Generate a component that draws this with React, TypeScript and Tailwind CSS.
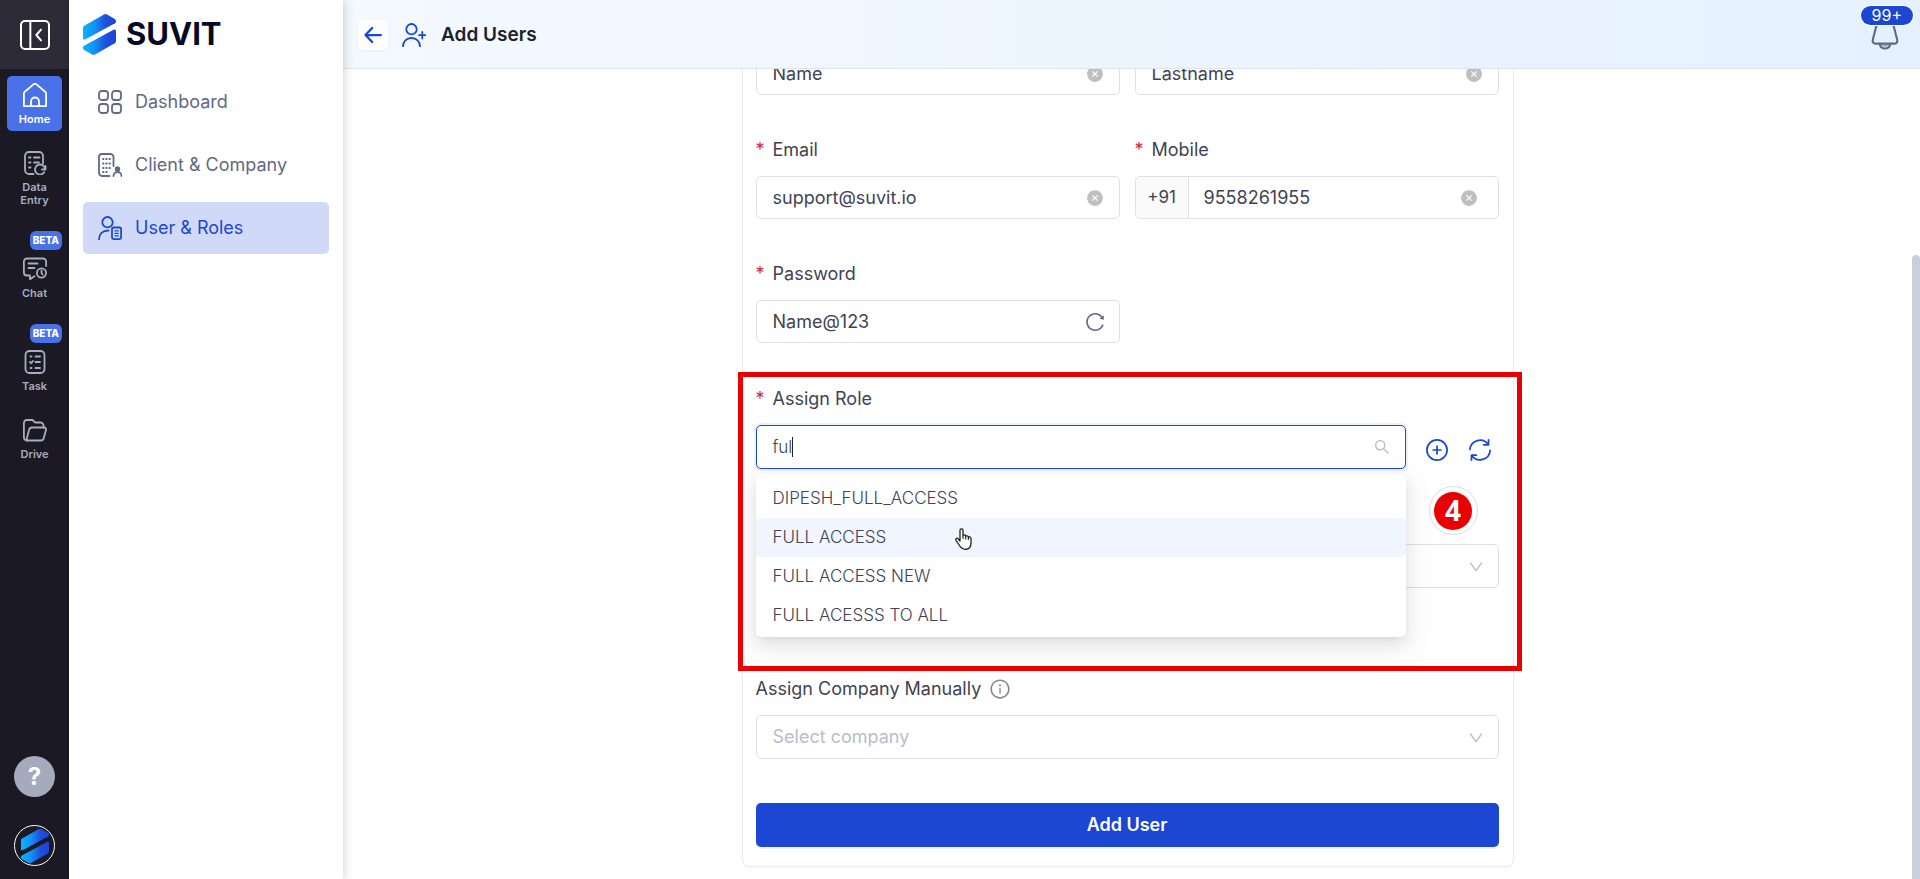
import { useId } from 'react'
import type { ReactNode } from 'react'
import {
  AiFillCloseCircle,
  AiOutlineDown,
  AiOutlineInfoCircle,
  AiOutlineReload,
  AiOutlineSearch,
} from 'react-icons/ai'
import { clsx } from 'clsx'

// ---- Icons ----
function Icon({ children, className = 'size-6', width = 1.8 }: { children: ReactNode; className?: string; width?: number }) {
  return (
    <svg
      viewBox="0 0 24 24"
      className={className}
      fill="none"
      stroke="currentColor"
      strokeWidth={width}
      strokeLinecap="round"
      strokeLinejoin="round"
      aria-hidden="true"
    >
      {children}
    </svg>
  )
}

function SuvitMark({ className }: { className: string }) {
  const id = useId()
  return (
    <svg viewBox="0 0 33 41" className={className} aria-hidden="true">
      <defs>
        <linearGradient id={id} x1="0" y1="0" x2="1" y2="0">
          <stop offset="0" stopColor="#00b7ff" />
          <stop offset="0.35" stopColor="#1590f5" />
          <stop offset="0.7" stopColor="#1d4fdb" />
          <stop offset="1" stopColor="#1b45d4" />
        </linearGradient>
      </defs>
      <path
        fill={`url(#${id})`}
        d="M1.2 11.8 21 .5Q22.500-.3 24 .5L31.800 4.900Q33 5.700 33 7V7.500Q33 8.600 32 9.200L2.500 25.200Q0 26.300 0 24V14Q0 12.500 1.200 11.800Z"
      />
      <path
        fill={`url(#${id})`}
        d="M1 31.800 30.500 15.800Q33 14.700 33 17V27Q33 28.500 31.800 29.200L12 40.500Q10.500 41.300 9 40.500L1.200 36.100Q0 35.300 0 34V33.500Q0 32.400 1 31.800Z"
      />
    </svg>
  )
}

const CollapseIcon = () => (
  <Icon className="size-8" width={1.5}>
    <rect x="1.500" y="1.500" width="21" height="21" rx="3" />
    <path d="M8.500 1.500v21M16.500 8l-3.500 4 3.500 4" />
  </Icon>
)

const HomeIcon = () => (
  <Icon>
    <path d="M.9 23.100V10.500c0-.7.3-1.300.9-1.800L10.500 1.400a2.300 2.300 0 0 1 3 0l8.700 7.300c.6.5.9 1.100.9 1.800v12.600Z" />
    <path d="M8 23v-4.500a4 4 0 0 1 8 0V23" />
  </Icon>
)

const DataEntryIcon = () => (
  <Icon>
    <path d="M10.500 23H6a4 4 0 0 1-4-4V5a4 4 0 0 1 4-4h10a4 4 0 0 1 4 4v7.500" />
    <path d="M6 6.500h1.500M11 6.500h5.500M6 11.500h1.500M11 11.500h5M6 16.500h1.500" />
    <path d="M22.500 15v3.500H19M22 18a5 5 0 1 0-.8 3.300" />
  </Icon>
)

const ChatIcon = () => (
  <Icon>
    <path d="M23.100 9V4.500a3 3 0 0 0-3-3H3.900a3 3 0 0 0-3 3v11a3 3 0 0 0 3 3H7v3.700l4.500-3" />
    <path d="M5.500 6.500h9M5.500 11h6" />
    <circle cx="18.500" cy="16" r="4.600" />
    <path d="M18.500 13.500V16l1.200 1.500" />
  </Icon>
)

const TaskIcon = () => (
  <Icon>
    <rect x="2.500" y="1" width="19" height="22" rx="4" />
    <path d="M7.500 6.500h1M12.500 6.500H17M7 12l1.200 1.200L10 11M12.500 12H17M7.500 18h1M12.500 18H17" />
  </Icon>
)

const DriveIcon = () => (
  <Icon>
    <path d="M20.500 9.500V7.500a3 3 0 0 0-3-3h-5.200L9.500 2H3.900a3 3 0 0 0-3 3v14a3.500 3.500 0 0 0 3.400 3.500" />
    <path d="M3.300 22.500h14.500a3 3 0 0 0 2.900-2.300l2.300-8.400a1.800 1.800 0 0 0-1.700-2.300H9a3 3 0 0 0-2.900 2.200L3.300 22.500Z" />
  </Icon>
)

const DashboardIcon = () => (
  <Icon>
    <rect x="1" y="1" width="9" height="9" rx="2.800" />
    <rect x="14" y="1" width="9" height="9" rx="2.800" />
    <rect x="1" y="14" width="9" height="9" rx="2.800" />
    <rect x="14" y="14" width="9" height="9" rx="2.800" />
  </Icon>
)

const CompanyIcon = () => (
  <Icon>
    <path d="M11.500 23H4a3 3 0 0 1-3-3V4a3 3 0 0 1 3-3h8.500a3 3 0 0 1 3 3v9" />
    <path d="M5 6h.6M8.200 6h.6M11.400 6h.6M5 10.500h.6M8.200 10.500h.6M11.400 10.500h.6M5 15h.6M8.200 15h.6M11.400 15h.6M5 19h.6M8.200 19h.6" />
    <circle cx="19.500" cy="16" r="1.800" fill="currentColor" />
    <path d="M15.500 23a4 4 0 0 1 8 0" />
  </Icon>
)

const UserRolesIcon = () => (
  <Icon>
    <circle cx="9.500" cy="6.200" r="5.200" />
    <path d="M1 23.500C1 18 4.500 14.500 10.500 14.500" />
    <rect x="14" y="11.500" width="9.100" height="11.600" rx="1.500" />
    <path d="M16.900 14.800h3.400M16.900 17.300h3.400M16.900 19.800h3.400" strokeWidth="1.300" />
  </Icon>
)

const AddUserIcon = () => (
  <Icon>
    <circle cx="9.500" cy="6.200" r="5.200" />
    <path d="M1 23.500c0-5 3.500-8.500 8.500-8.500s8.500 3.500 8.500 8.500M20.300 9v6.500M17 12.200h6.500" />
  </Icon>
)

const BackIcon = () => (
  <Icon className="size-5" width={2.7}>
    <path d="M21.500 12H3M11 3.500 3 12l8 8.500" />
  </Icon>
)

const BellIcon = () => (
  <Icon className="size-8" width={1.6}>
    <path d="M5.300 6C6.300 3 8.800 1.500 12 1.500S17.700 3 18.700 6l2.400 9.300c.5 2-.4 3.200-2.400 3.200H5.300c-2 0-2.900-1.200-2.400-3.200Z" />
    <path d="M8 18.700c.5 2.200 2 3.400 4 3.400s3.500-1.200 4-3.400" />
    <path d="M9.500 18.700c.4.900 1.300 1.500 2.500 1.500s2.100-.6 2.500-1.500" strokeWidth="0.700" />
  </Icon>
)

const AddCircleIcon = () => (
  <Icon className="size-[22px]" width={1.9}>
    <circle cx="12" cy="12" r="11" />
    <path d="M12 7.800v8.400M7.800 12h8.400" />
  </Icon>
)

const SyncIcon = () => (
  <Icon className="size-[22px]" width={1.9}>
    <path d="M1 11.500A11 11 0 0 1 21 6M21.300 1v5.300H16M23 12.500A11 11 0 0 1 3 18M2.700 23v-5.300H8" />
  </Icon>
)

const HandCursor = () => (
  <svg viewBox="0 0 17 22" className="h-[22px] w-[17px]" aria-hidden="true">
    <path
      fill="#fff"
      stroke="#111"
      strokeWidth="1.200"
      strokeLinejoin="round"
      d="M5 13V2.300C5 .3 8 .3 8 2.300V8c0-1.600 2.700-1.600 2.700.2v.6c0-1.500 2.600-1.400 2.600.3v.7c0-1.300 2.700-1.200 2.700.6V15c0 4-2 6.300-5.500 6.300-3.300 0-4.600-1.300-6-3.800L1 12.300c-.9-1.600 1-2.800 2.200-1.500Z"
    />
    <path stroke="#111" strokeWidth="1" d="M8 8v3M10.700 9v2.500M13.300 10v2" />
  </svg>
)

// ---- Left rail ----
const railItems = [
  { label: 'Home', icon: <HomeIcon />, active: true },
  { label: 'Data Entry', icon: <DataEntryIcon /> },
  { label: 'Chat', icon: <ChatIcon />, beta: true },
  { label: 'Task', icon: <TaskIcon />, beta: true },
  { label: 'Drive', icon: <DriveIcon /> },
]

function Rail() {
  return (
    <aside className="flex w-[69px] shrink-0 flex-col bg-[#1b1924]">
      <button aria-label="Collapse menu" className="flex h-[69px] items-center justify-center bg-[#2d2b37] text-white">
        <CollapseIcon />
      </button>
      <nav className="flex flex-col items-center gap-[13px] pt-[7px]">
        {railItems.map(item => (
          <div key={item.label} className="flex w-[55px] flex-col">
            {item.beta && (
              <span className="mt-1.5 self-end rounded-md bg-[#4a72e8] px-[3px] text-[10px] leading-[19px] font-extrabold text-white">
                BETA
              </span>
            )}
            <a
              href="#"
              className={clsx(
                'flex flex-col items-center gap-1.5 rounded-[5px] px-2 pt-[7px] pb-[5px] text-center text-[11px] leading-[13px] font-semibold',
                item.active ? 'bg-[#4a72e8] text-white' : 'text-[#a9adbf]',
              )}
            >
              {item.icon}
              {item.label}
            </a>
          </div>
        ))}
      </nav>
      <div className="mt-auto flex flex-col items-center gap-7 pb-[13px]">
        <button
          aria-label="Help"
          className="size-[41px] rounded-full bg-[#a5aabd] text-2xl font-bold text-white"
        >
          ?
        </button>
        <button
          aria-label="Account"
          className="flex size-[41px] items-center justify-center overflow-hidden rounded-full border border-white"
        >
          <SuvitMark className="h-9 w-7" />
        </button>
      </div>
    </aside>
  )
}

// ---- Sidebar ----
const menuItems = [
  { label: 'Dashboard', icon: <DashboardIcon /> },
  { label: 'Client & Company', icon: <CompanyIcon /> },
  { label: 'User & Roles', icon: <UserRolesIcon />, active: true },
]

function Sidebar() {
  return (
    <aside className="z-30 flex w-[274px] shrink-0 flex-col bg-white px-3.5 shadow-[1px_0_10px_rgba(0,0,0,0.18)]">
      <a href="#" className="flex h-[69px] items-center gap-2.5 text-[31px] font-bold text-[#050b24]">
        <SuvitMark className="h-[41px] w-[33px]" />
        SUVIT
      </a>
      <nav className="flex flex-col gap-[11px] pt-[7px]">
        {menuItems.map(item => (
          <a
            key={item.label}
            href="#"
            className={clsx(
              'flex h-[52px] items-center gap-[13px] rounded-[5px] px-[15px]',
              item.active ? 'bg-[#d0daf8] text-[#1b47d3]' : 'text-[#626985]',
            )}
          >
            {item.icon}
            {item.label}
          </a>
        ))}
      </nav>
    </aside>
  )
}

// ---- Form parts ----
const boxClass = 'flex items-center rounded-[5px] border border-[#dfe1e5] bg-white'

function Label({ htmlFor, required, children }: { htmlFor: string; required?: boolean; children: ReactNode }) {
  return (
    <label htmlFor={htmlFor} className="mb-3.5 flex h-6 items-center gap-2">
      {required && <span className="text-[#cf2a3c]">*</span>}
      {children}
    </label>
  )
}

function ClearButton() {
  return (
    <button type="button" aria-label="Clear" className="text-[#bfbfbf]">
      <AiFillCloseCircle className="size-[18px]" />
    </button>
  )
}

function SelectBox({ id, placeholder }: { id: string; placeholder: string }) {
  return (
    <div className="relative">
      <select
        id={id}
        aria-label={placeholder ? undefined : 'Assign group'}
        className="h-11 w-full appearance-none rounded-[5px] border border-[#dfe1e5] bg-transparent px-4 text-[#b9bccd]"
      >
        <option>{placeholder}</option>
      </select>
      <AiOutlineDown className="pointer-events-none absolute top-3.5 right-3.5 size-[18px] text-[#bfbfbf]" />
    </div>
  )
}

const roles = ['DIPESH_FULL_ACCESS', 'FULL ACCESS', 'FULL ACCESS NEW', 'FULL ACESSS TO ALL']

function RolePicker() {
  return (
    <div className="flex">
      <div className="relative flex-1">
        <div className="flex h-11 items-center rounded-[5px] border border-[#1b47d3] bg-white pr-3.5 pl-4 shadow-[0_0_0_2px_rgba(27,71,211,0.08)]">
          <input
            id="role"
            role="combobox"
            aria-expanded="true"
            aria-controls="role-options"
            defaultValue="ful"
            className="field-sizing-content text-[17px] font-light caret-transparent outline-none"
          />
          <span className="h-5 w-px bg-[#1f2430]" />
          <AiOutlineSearch className="ml-auto size-[18px] text-[#bfbfbf]" />
        </div>
        <ul
          id="role-options"
          role="listbox"
          className="absolute top-full right-0 left-0 z-10 mt-[5px] rounded-[5px] bg-white pt-[5px] pb-0.5 shadow-[0_3px_6px_-4px_rgba(0,0,0,0.12),0_6px_16px_rgba(0,0,0,0.08),0_9px_28px_8px_rgba(0,0,0,0.05)]"
        >
          {roles.map(role => (
            <li
              key={role}
              role="option"
              aria-selected={role === 'FULL ACCESS'}
              className={clsx(
                'flex h-[39px] items-center px-[17px] text-[17px] font-light',
                role === 'FULL ACCESS' && 'rounded-[5px] bg-[#f1f5fe]',
              )}
            >
              {role}
            </li>
          ))}
        </ul>
        <div className="pointer-events-none absolute top-[103px] left-[199px] z-20">
          <HandCursor />
        </div>
      </div>
      <div className="flex items-center gap-[21px] pt-1.5 pr-2 pl-5 text-[#1b47d3]">
        <button type="button" aria-label="Add role"><AddCircleIcon /></button>
        <button type="button" aria-label="Refresh roles"><SyncIcon /></button>
      </div>
    </div>
  )
}

function AddUserForm() {
  return (
    <form className="mx-auto flex w-full max-w-[772px] flex-col rounded-lg border border-[#ececef] bg-white pr-3.5 pb-[19px] pl-[13px] shadow-xs">
      <div className="grid grid-cols-2 gap-x-[15px] gap-y-[43px]">
        <div className={clsx(boxClass, 'h-[43px] pr-[15px]')}>
          <input aria-label="First name" defaultValue="Name" className="min-w-0 flex-1 px-4 outline-none" />
          <ClearButton />
        </div>
        <div className={clsx(boxClass, 'h-[43px] pr-[15px]')}>
          <input aria-label="Last name" defaultValue="Lastname" className="min-w-0 flex-1 px-4 outline-none" />
          <ClearButton />
        </div>
        <div>
          <Label htmlFor="email" required>Email</Label>
          <div className={clsx(boxClass, 'h-[43px] pr-[15px]')}>
            <input id="email" type="email" defaultValue="support@suvit.io" className="min-w-0 flex-1 px-4 outline-none" />
            <ClearButton />
          </div>
        </div>
        <div>
          <Label htmlFor="mobile" required>Mobile</Label>
          <div className={clsx(boxClass, 'h-[43px] pr-5')}>
            <span className="flex h-full w-[53px] items-center justify-center rounded-l-[5px] border-r border-[#dfe1e5] bg-[#fafafa] text-[17px]">
              +91
            </span>
            <input id="mobile" type="tel" defaultValue="9558261955" className="min-w-0 flex-1 px-[15px] outline-none" />
            <ClearButton />
          </div>
        </div>
        <div>
          <Label htmlFor="password" required>Password</Label>
          <div className={clsx(boxClass, 'h-[43px] pr-[13px]')}>
            <input id="password" defaultValue="Name@123" className="min-w-0 flex-1 px-4 outline-none" />
            <button type="button" aria-label="Generate password" className="text-[#626985]">
              <AiOutlineReload className="size-[22px]" />
            </button>
          </div>
        </div>
      </div>

      <div className="relative mt-11">
        <Label htmlFor="role" required>Assign Role</Label>
        <RolePicker />
        <div className="mt-[75px]">
          <SelectBox id="group" placeholder="" />
        </div>
        {/* Step highlight */}
        <div className="pointer-events-none absolute -top-[15px] -right-[23px] -bottom-[83px] -left-[18px] z-20 border-[5px] border-[#e90000]" />
        <div className="absolute top-[99px] right-[21px] z-20 flex size-[49px] items-center justify-center rounded-full border border-[#dcdcdc] bg-white">
          <span className="flex size-[38px] items-center justify-center rounded-full bg-[#e90000] font-['Open_Sans',sans-serif] text-[28px] font-bold text-white">
            4
          </span>
        </div>
      </div>

      <div className="mt-[89px]">
        <Label htmlFor="company">
          Assign Company Manually
          <AiOutlineInfoCircle className="size-[22px] text-[#8a8a8a]" />
        </Label>
        <SelectBox id="company" placeholder="Select company" />
      </div>

      <button
        type="button"
        className="mt-11 h-11 rounded-[5px] bg-[#1b47d3] font-semibold text-white shadow-[0_2px_0_rgba(5,95,255,0.06)]"
      >
        Add User
      </button>
    </form>
  )
}

export default function App() {
  return (
    <div className="flex h-screen overflow-hidden bg-white font-['Inter',sans-serif] text-lg text-[#3f4354]">
      <Rail />
      <Sidebar />
      <div className="flex min-w-0 flex-1 flex-col">
        <header className="z-20 flex h-[69px] shrink-0 items-center border-b border-[#dfe3ec] bg-linear-to-r from-[#f4f9ff] to-[#e5f1ff] pt-px pr-[19px] pl-[15px]">
          <button
            aria-label="Back"
            className="flex size-[30px] items-center justify-center rounded-[5px] bg-white text-[#1b47d3] shadow-xs"
          >
            <BackIcon />
          </button>
          <span className="ml-3.5 text-[#1b47d3]"><AddUserIcon /></span>
          <h1 className="ml-[15px] text-[19px] font-semibold text-[#1d2129]">Add Users</h1>
          <button aria-label="Notifications" className="relative ml-auto text-[#626985]">
            <BellIcon />
            <span className="absolute -top-[13px] -right-[12px] rounded-full bg-[#1b47d3] px-[11px] text-base leading-[19px] text-white ring-1 ring-white">
              99+
            </span>
          </button>
        </header>
        <main className="relative flex min-h-0 flex-1 flex-col justify-end overflow-hidden pr-2 pb-3">
          <AddUserForm />
          <div className="absolute right-0 bottom-0 h-[77%] w-2 rounded-t-full bg-[#c9cfdb]" />
        </main>
      </div>
    </div>
  )
}
